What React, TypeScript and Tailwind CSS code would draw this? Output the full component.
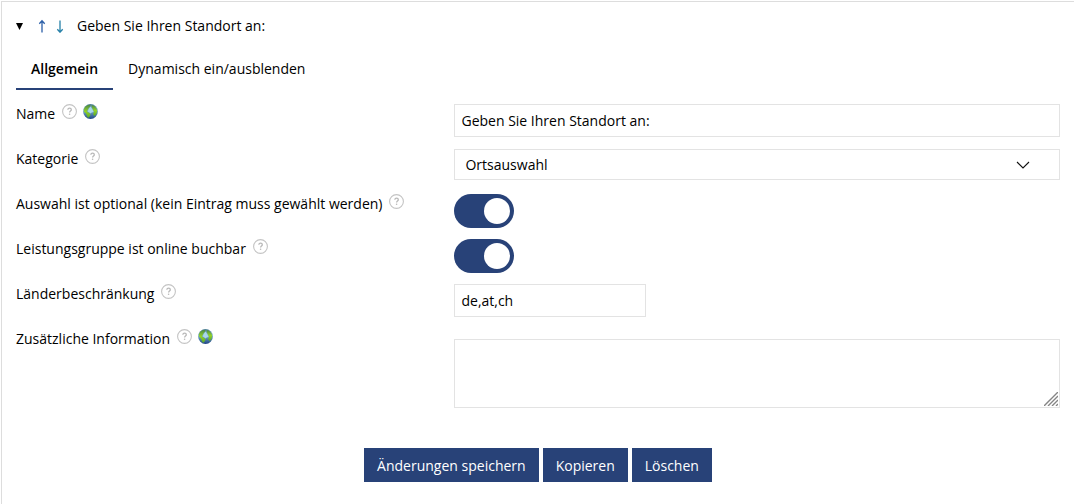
import React, { useState } from 'react';

interface FieldRowProps {
  label: string;
  htmlFor: string;
  translatable?: boolean;
  children: React.ReactNode;
}

interface ToggleProps {
  id: string;
}

const HelpIcon: React.FC = () => (
  <svg className="w-[15px] h-[15px] shrink-0" viewBox="0 0 15 15" fill="none" aria-hidden="true">
    <circle cx="7.5" cy="7.5" r="6.9" stroke="#c4c4c4" strokeWidth="1.1" />
    <path d="M5.8 5.7c.1-1 .8-1.5 1.8-1.5s1.7.6 1.7 1.5c0 1.2-1.7 1.3-1.7 2.7" stroke="#b8b8b8" strokeWidth="1.3" />
    <circle cx="7.6" cy="10.2" r=".8" fill="#b8b8b8" />
  </svg>
);

const GlobeIcon: React.FC = () => (
  <svg className="w-[15px] h-[15px] shrink-0" viewBox="0 0 15 15" aria-hidden="true">
    <defs>
      <linearGradient id="ocean" x1="0" y1="0" x2="0" y2="1">
        <stop offset="0" stopColor="#4f7f96" />
        <stop offset=".4" stopColor="#7fb6cf" />
        <stop offset="1" stopColor="#1f4585" />
      </linearGradient>
      <linearGradient id="land" x1="0" y1="0" x2="0" y2="1">
        <stop offset="0" stopColor="#4a8748" />
        <stop offset=".5" stopColor="#93d228" />
        <stop offset="1" stopColor="#55a52c" />
      </linearGradient>
    </defs>
    <circle cx="7.5" cy="7.5" r="7.4" fill="url(#ocean)" />
    <path d="M1.8 3.2C3 1.6 4.8.7 7 .7L7.6 2 5.8 4 4.6 6.2 3.8 7.6 5.4 8.6 7.6 10 7 12 5 14 3.8 11.8 3 9.6 1 7.8.8 5.6Z" fill="url(#land)" />
    <path d="M8.6.9C11.8 1.3 14 4.2 14.2 7L13.4 10 11.6 12.2 10 10 11 7.8 9.8 5.6 9 3.4Z" fill="url(#land)" />
    <path d="M7.6 2.4 9 4.8 10.6 8 8.6 8.6 7.8 9.6 4.8 7.4 5.8 4.8Z" fill="#a9d8e8" />
  </svg>
);

const FieldRow: React.FC<FieldRowProps> = ({ label, htmlFor, translatable, children }) => (
  <div className="flex items-start min-h-[45px]">
    <div className="w-[42%] shrink-0 flex items-start">
      <label htmlFor={htmlFor} className="leading-5">{label}</label>
      <span className="flex gap-1.5 pl-[7px]">
        <HelpIcon />
        {translatable && <GlobeIcon />}
      </span>
    </div>
    <div className="flex-1 min-w-0">{children}</div>
  </div>
);

const Toggle: React.FC<ToggleProps> = ({ id }) => (
  <input
    id={id}
    type="checkbox"
    role="switch"
    defaultChecked
    className="block appearance-none w-[60px] h-[34px] p-1 rounded-full bg-gray-300 checked:bg-[#284278] cursor-pointer before:block before:w-[26px] before:h-[26px] before:rounded-full before:bg-white before:transition-transform checked:before:translate-x-[26px]"
  />
);

const inputClass = 'block h-[33px] px-1.5 border border-[#e3e3e3] bg-white outline-none focus:border-[#284278]';
const buttonClass = 'h-[34px] px-[13px] pt-0.5 bg-[#284278] text-white cursor-pointer hover:bg-[#1d3260]';

const App: React.FC = () => {
  const [name, setName] = useState('Geben Sie Ihren Standort an:');
  const [countries, setCountries] = useState('de,at,ch');

  return (
    <div className="pl-px pt-px bg-white text-black text-sm font-['Open_Sans',sans-serif]">
      <form
        className="border-l border-t border-[#dddddd] px-3.5 pt-3.5 pb-[22px]"
        onSubmit={(e) => e.preventDefault()}
      >
        <div className="flex items-center h-5">
          <button type="button" aria-label="Zuklappen" className="w-[7px] mr-3.5">
            <svg className="w-[7px] h-[7px]" viewBox="0 0 7 7"><path d="M0 0h7L3.5 7Z" fill="#000" /></svg>
          </button>
          <button type="button" aria-label="Nach oben" className="mr-2">
            <svg className="w-2.5 h-3.5" viewBox="0 0 10 14" fill="none" stroke="#2b5fa8" strokeWidth="1.3">
              <path d="M5 13.5V2M2.3 4.8 5 1.8l2.7 3" />
            </svg>
          </button>
          <button type="button" aria-label="Nach unten" className="mr-3">
            <svg className="w-2.5 h-3.5" viewBox="0 0 10 14" fill="none" stroke="#2680a8" strokeWidth="1.3">
              <path d="M5 1.5V13M2.3 10.2 5 13.2l2.7-3" />
            </svg>
          </button>
          <span>Geben Sie Ihren Standort an:</span>
        </div>

        <div className="flex mt-3 mb-3.5" role="tablist">
          <button type="button" role="tab" aria-selected="true" className="h-[42px] px-[15px] pt-0.5 border-b-2 border-[#284278] font-semibold">
            Allgemein
          </button>
          <button type="button" role="tab" aria-selected="false" className="h-[42px] px-[15px] pt-0.5 border-b-2 border-transparent">
            Dynamisch ein/ausblenden
          </button>
        </div>

        <FieldRow label="Name" htmlFor="name" translatable>
          <input id="name" type="text" value={name} onChange={(e) => setName(e.target.value)} className={`${inputClass} w-full`} />
        </FieldRow>

        <FieldRow label="Kategorie" htmlFor="category">
          <div className="relative">
            <select id="category" className="block appearance-none w-full h-[31px] pl-2.5 pr-12 border border-[#e3e3e3] bg-white outline-none">
              <option>Ortsauswahl</option>
            </select>
            <svg className="absolute right-[30px] top-3 w-3.5 h-2 pointer-events-none" viewBox="0 0 14 8" fill="none" stroke="#111" strokeWidth="1.1">
              <path d="M1 1l6 6 6-6" />
            </svg>
          </div>
        </FieldRow>

        <FieldRow label="Auswahl ist optional (kein Eintrag muss gewählt werden)" htmlFor="optional">
          <Toggle id="optional" />
        </FieldRow>

        <FieldRow label="Leistungsgruppe ist online buchbar" htmlFor="bookable">
          <Toggle id="bookable" />
        </FieldRow>

        <FieldRow label="Länderbeschränkung" htmlFor="countries">
          <input id="countries" type="text" value={countries} onChange={(e) => setCountries(e.target.value)} className={`${inputClass} w-48`} />
        </FieldRow>

        <FieldRow label="Zusätzliche Information" htmlFor="info" translatable>
          <div className="relative pt-2.5">
            <textarea id="info" className="block w-full h-[69px] p-1.5 border border-[#e3e3e3] bg-white outline-none resize-none" />
            <svg className="absolute right-0.5 bottom-0.5 w-3.5 h-3.5 pointer-events-none" viewBox="0 0 14 14" stroke="#858585" strokeWidth="1.4">
              <path d="M0 14 14 0M4 14 14 4M8 14l6-6M12 14l2-2" />
            </svg>
          </div>
        </FieldRow>

        <div className="flex justify-center gap-1 mt-10">
          <button type="submit" className={buttonClass}>Änderungen speichern</button>
          <button type="button" className={buttonClass}>Kopieren</button>
          <button type="button" className={buttonClass}>Löschen</button>
        </div>
      </form>
    </div>
  );
};

export default App;
